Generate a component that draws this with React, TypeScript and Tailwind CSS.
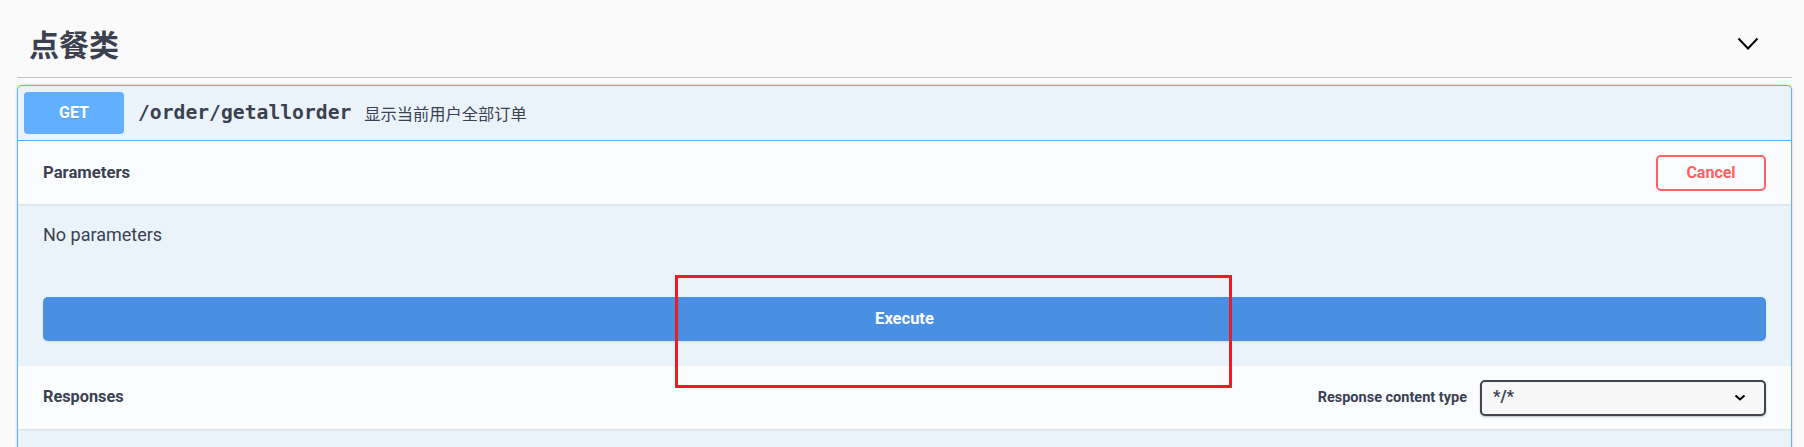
import React from "react";

function Chevron({ className, w, h, sw }: { className?: string; w: number; h: number; sw: number }) {
  return (
    <svg className={className} width={w} height={h} viewBox={`0 0 ${w} ${h}`} fill="none">
      <polyline
        points={`${sw / 2 + 0.5},${sw / 2 + 0.5} ${w / 2},${h - sw / 2 - 0.5} ${w - sw / 2 - 0.5},${sw / 2 + 0.5}`}
        stroke="#000"
        strokeWidth={sw}
        strokeLinejoin="miter"
      />
    </svg>
  );
}

export default function App() {
  return (
    <div className="relative h-[447px] overflow-hidden bg-[#fafafa] pl-[17px] pr-[12px] font-['Roboto',sans-serif] text-[#3b4151]">
      {/* tag header */}
      <div className="flex h-[78px] items-center border-b border-[#c1c3c7] pl-[12px] pr-[33px] pt-[9px]">
        <h3 className="flex-1 font-['Noto_Sans_CJK_SC',sans-serif] text-[30px] font-bold leading-none">点餐类</h3>
        <Chevron w={22} h={13} sw={2} />
      </div>

      {/* operation block */}
      <div className="mt-[7px] overflow-hidden rounded-[5px] border border-[#61affe] bg-[#ebf3fa] shadow-[0_0_3px_rgba(0,0,0,0.19)]">
        <div className="flex h-[55px] items-center border-b border-[#61affe] px-[6px]">
          <span className="flex h-[42px] w-[100px] items-center justify-center rounded-[4px] bg-[#61affe] text-[16px] font-bold text-white [text-shadow:0_1px_0_rgba(0,0,0,0.1)]">
            GET
          </span>
          <span className="ml-[14px] font-['DejaVu_Sans_Mono',monospace] text-[19.7px] font-bold text-[#3b4151]">
            /order/getallorder
          </span>
          <span className="ml-[13px] font-['Noto_Sans_CJK_SC',sans-serif] text-[16.25px] text-[#3b4151]">
            显示当前用户全部订单
          </span>
        </div>

        {/* parameters */}
        <div className="relative flex h-[63px] items-center justify-between bg-[#fbfcfe] px-[25px] shadow-[0_1px_2px_rgba(0,0,0,0.1)]">
          <h4 className="text-[16.7px] font-bold">Parameters</h4>
          <button className="h-[36px] w-[110px] rounded-[5px] border-2 border-[#ff6060] text-[16px] font-bold text-[#ff6060]">
            Cancel
          </button>
        </div>
        <div className="px-[25px]">
          <p className="pb-[22px] pt-[16px] text-[18px] leading-[30px]">No parameters</p>
          <div className="py-[25px]">
            <button className="h-[44px] w-full rounded-[5px] bg-[#4990e2] text-[16.5px] font-bold text-white shadow-[0_1px_2px_rgba(0,0,0,0.1)]">
              Execute
            </button>
          </div>
        </div>

        {/* responses */}
        <div className="relative flex h-[63px] items-center justify-between bg-[#fbfcfe] px-[25px] shadow-[0_1px_2px_rgba(0,0,0,0.1)]">
          <h4 className="text-[16.3px] font-bold">Responses</h4>
          <div className="flex items-center">
            <span className="mr-[13px] text-[14.5px] font-bold">Response content type</span>
            <div className="flex h-[36px] w-[286px] items-center justify-between rounded-[5px] border-2 border-[#41444e] bg-[#f7f7f7] pl-[11px] pr-[18px] shadow-[0_1px_2px_0_rgba(0,0,0,0.25)]">
              <span className="text-[16.5px] font-bold">*/*</span>
              <Chevron w={12} h={7} sw={2} />
            </div>
          </div>
        </div>
        <div className="h-[30px]" />
      </div>

      {/* red annotation box */}
      <div className="absolute left-[675px] top-[275px] h-[113px] w-[557px] border-[3px] border-[#ed1c24]" />
    </div>
  );
}
